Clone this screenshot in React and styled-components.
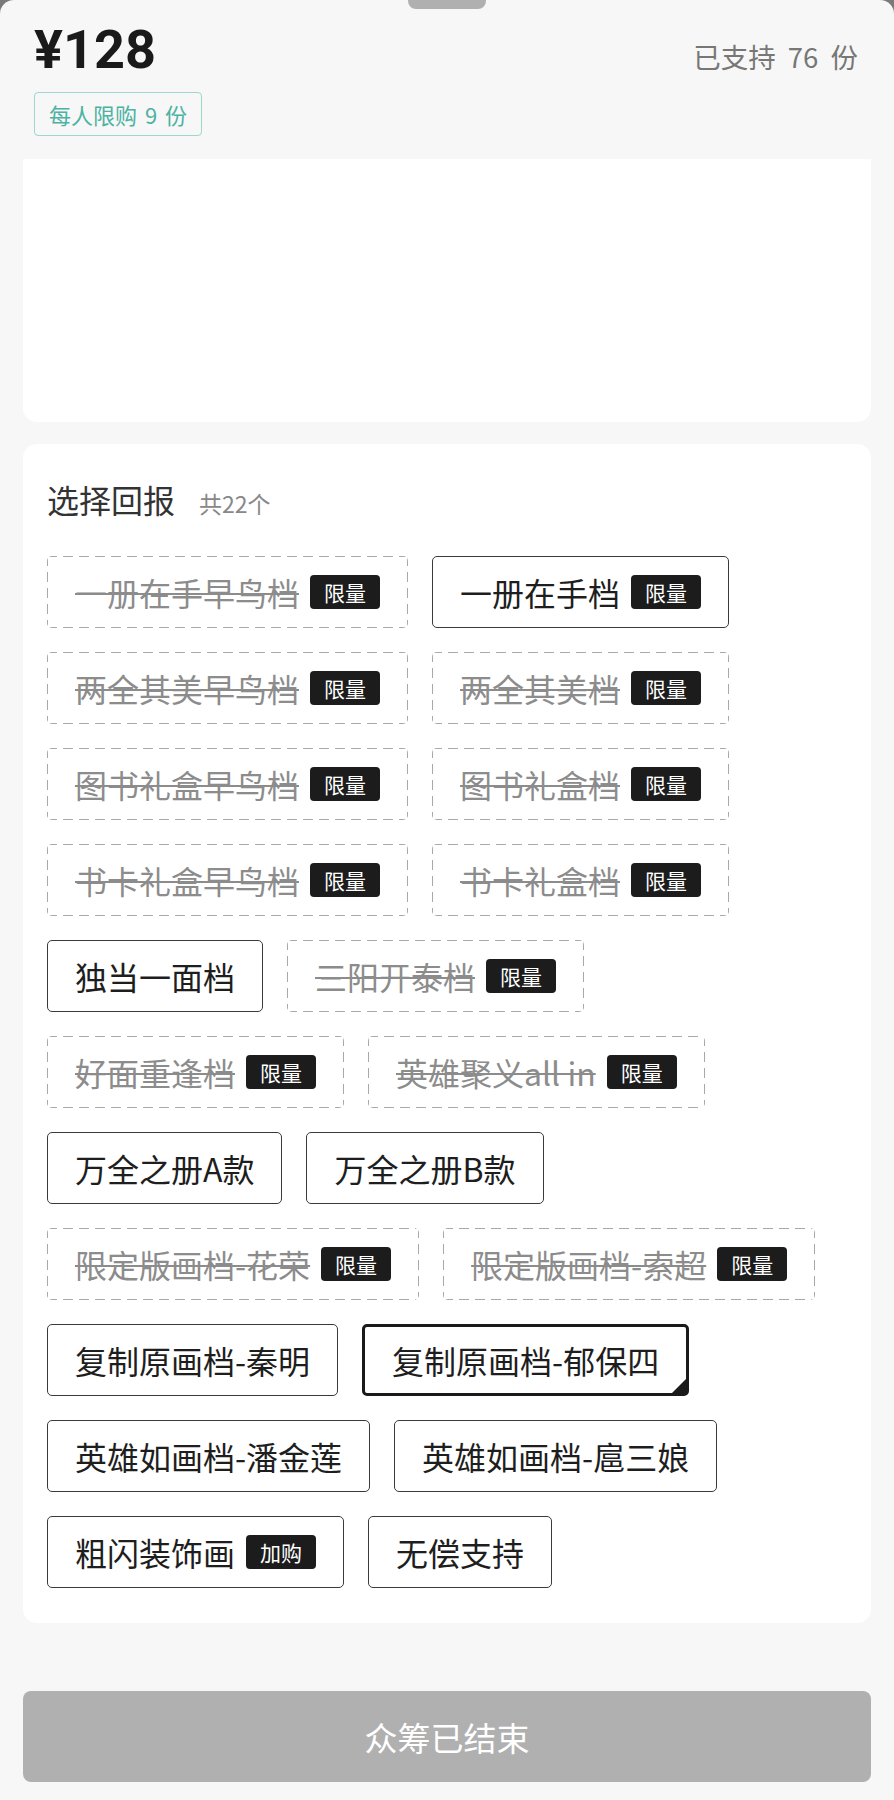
import React from "react";
import styled, { createGlobalStyle, css } from "styled-components";

const GlobalStyle = createGlobalStyle`
  * { box-sizing: border-box; }
  html, body { margin: 0; padding: 0; }
  body {
    background: #7a7a7a;
    font-family: "Noto Sans CJK SC", "Noto Sans", sans-serif;
  }
`;

const Sheet = styled.div`
  min-height: 1800px;
  background: #f7f7f7;
  border-radius: 14px 14px 0 0;
  display: flex;
  flex-direction: column;
  padding: 0 23px 18px;
`;

const Handle = styled.div`
  align-self: center;
  width: 78px;
  height: 9px;
  background: #b0b0b0;
  border-radius: 0 0 8px 8px;
`;

const Header = styled.div`
  padding: 0 13px 0 11px;
  display: flex;
  flex-direction: column;
  align-items: flex-start;
`;

const PriceRow = styled.div`
  align-self: stretch;
  margin-top: 11px;
  display: flex;
  justify-content: space-between;
  align-items: baseline;
`;

const Price = styled.div`
  font-family: Roboto, "Liberation Sans", sans-serif;
  font-weight: 700;
  font-size: 54px;
  line-height: 60px;
  color: #1a1a1a;
`;

const Supported = styled.div`
  font-size: 27.5px;
  line-height: 36px;
  word-spacing: 6px;
  color: #777;
`;

const LimitTag = styled.div`
  margin-top: 12px;
  height: 44px;
  padding: 0 14px;
  display: inline-flex;
  align-items: center;
  border: 1px solid #9cd8ce;
  border-radius: 4px;
  color: #4cb2a3;
  font-size: 22px;
  word-spacing: 3px;
`;

const Card = styled.div`
  background: #ffffff;
  border-radius: ${(p) => (p.$flatTop ? "0 0 14px 14px" : "14px")};
  margin-top: ${(p) => p.$gap}px;
`;

const BlankCard = styled(Card)`
  height: 263px;
`;

const RewardCard = styled(Card)`
  padding: 33px 24px 35px;
`;

const TitleRow = styled.div`
  display: flex;
  align-items: baseline;
  gap: 24px;
`;

const Title = styled.div`
  font-size: 32px;
  line-height: 44px;
  color: #333;
`;

const Count = styled.div`
  font-size: 23px;
  color: #888;
`;

const ChipList = styled.div`
  margin-top: 35px;
  display: flex;
  flex-wrap: wrap;
  gap: 24px;
`;

const dash = "#a8a8a8";

const Chip = styled.div`
  position: relative;
  height: 72px;
  display: inline-flex;
  align-items: center;
  gap: 11px;
  padding: 0 27px;
  border: 1px solid #3a3a3a;
  border-radius: 5px;
  font-size: 32px;
  line-height: 40px;
  color: #1e1e1e;
  white-space: nowrap;

  ${(p) =>
    p.$disabled &&
    css`
      border: none;
      padding: 0 28px;
      color: #8c8c8c;
      background:
        linear-gradient(to right, ${dash} 62%, transparent 0) top left / 16px 1px repeat-x,
        linear-gradient(to right, ${dash} 62%, transparent 0) bottom left / 16px 1px repeat-x,
        linear-gradient(to bottom, ${dash} 62%, transparent 0) top left / 1px 16px repeat-y,
        linear-gradient(to bottom, ${dash} 62%, transparent 0) top right / 1px 16px repeat-y;
    `}

  ${(p) =>
    p.$selected &&
    css`
      border: 3px solid #1a1a1a;
      padding: 0 27px;
      &::after {
        content: "";
        position: absolute;
        right: 0;
        bottom: 0;
        width: 0;
        height: 0;
        border-style: solid;
        border-width: 0 0 14px 14px;
        border-color: transparent transparent #1a1a1a transparent;
      }
    `}
`;

const Label = styled.span`
  ${(p) =>
    p.$struck &&
    css`
      text-decoration: line-through;
      text-decoration-thickness: 2px;
      text-decoration-color: #8c8c8c;
    `}
`;

const Badge = styled.span`
  height: 34px;
  padding: 0 14px;
  display: inline-flex;
  align-items: center;
  background: #1c1c1c;
  color: #fff;
  border-radius: 4px;
  font-size: 21px;
  line-height: 34px;
`;

const EndButton = styled.div`
  margin-top: 68px;
  height: 91px;
  border-radius: 8px;
  background: #b0b0b0;
  color: #fff;
  font-size: 33px;
  display: flex;
  align-items: center;
  justify-content: center;
`;

const rewards = [
  { name: "一册在手早鸟档", badge: "限量", disabled: true },
  { name: "一册在手档", badge: "限量" },
  { name: "两全其美早鸟档", badge: "限量", disabled: true },
  { name: "两全其美档", badge: "限量", disabled: true },
  { name: "图书礼盒早鸟档", badge: "限量", disabled: true },
  { name: "图书礼盒档", badge: "限量", disabled: true },
  { name: "书卡礼盒早鸟档", badge: "限量", disabled: true },
  { name: "书卡礼盒档", badge: "限量", disabled: true },
  { name: "独当一面档" },
  { name: "三阳开泰档", badge: "限量", disabled: true },
  { name: "好面重逢档", badge: "限量", disabled: true },
  { name: "英雄聚义all in", badge: "限量", disabled: true },
  { name: "万全之册A款" },
  { name: "万全之册B款" },
  { name: "限定版画档-花荣", badge: "限量", disabled: true },
  { name: "限定版画档-索超", badge: "限量", disabled: true },
  { name: "复制原画档-秦明" },
  { name: "复制原画档-郁保四", selected: true },
  { name: "英雄如画档-潘金莲" },
  { name: "英雄如画档-扈三娘" },
  { name: "粗闪装饰画", badge: "加购" },
  { name: "无偿支持" },
];

export default function App() {
  return (
    <>
      <GlobalStyle />
      <Sheet>
        <Handle />
        <Header>
          <PriceRow>
            <Price>¥128</Price>
            <Supported>已支持 76 份</Supported>
          </PriceRow>
          <LimitTag>每人限购 9 份</LimitTag>
        </Header>
        <BlankCard $flatTop $gap={23} />
        <RewardCard $gap={22}>
          <TitleRow>
            <Title>选择回报</Title>
            <Count>共22个</Count>
          </TitleRow>
          <ChipList>
            {rewards.map((r) => (
              <Chip key={r.name} $disabled={r.disabled} $selected={r.selected}>
                <Label $struck={r.disabled}>{r.name}</Label>
                {r.badge && <Badge>{r.badge}</Badge>}
              </Chip>
            ))}
          </ChipList>
        </RewardCard>
        <EndButton>众筹已结束</EndButton>
      </Sheet>
    </>
  );
}
